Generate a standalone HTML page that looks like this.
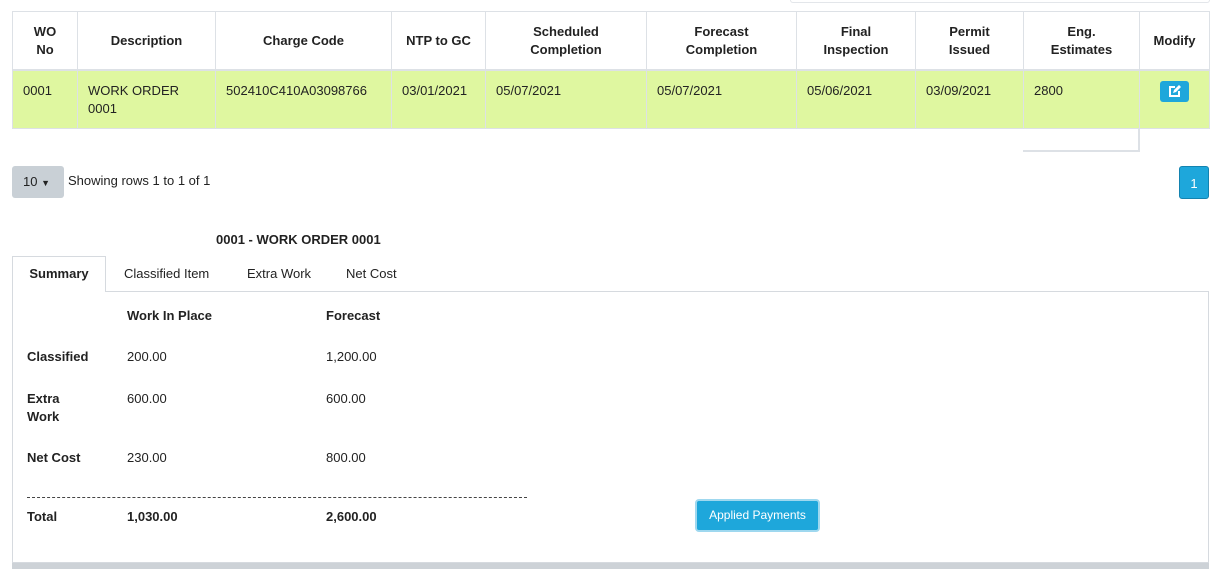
<!DOCTYPE html><html><head><style>
body{margin:0;width:1216px;height:573px;background:#fff;font-family:"Liberation Sans",sans-serif;font-size:13px;color:#222;position:relative;overflow:hidden}
.a{position:absolute}
.row{position:absolute;left:12px;display:flex;width:1198px}
.row div{box-sizing:border-box;border:1px solid #dde1e6;margin-right:-1px;line-height:18px;padding:0 10px}
.h div{height:59px;display:flex;align-items:center;justify-content:center;text-align:center;font-weight:bold}
.b{top:70px}.b div{height:59px;background:#dff7a0;padding-top:11px}
</style></head><body>
<div class="a" style="left:790px;top:-2px;width:418px;height:4px;border:1px solid #e3e6ea;border-top:none;border-radius:0 0 3px 3px"></div>
<div class="row h" style="top:11px">
<div style="width:66px">WO<br>No</div><div style="width:139px">Description</div><div style="width:177px">Charge Code</div><div style="width:95px">NTP to GC</div><div style="width:162px">Scheduled<br>Completion</div><div style="width:151px">Forecast<br>Completion</div><div style="width:120px">Final<br>Inspection</div><div style="width:109px">Permit<br>Issued</div><div style="width:117px">Eng.<br>Estimates</div><div style="width:71px">Modify</div></div>
<div class="row b">
<div style="width:66px">0001</div><div style="width:139px">WORK ORDER<br>0001</div><div style="width:177px">502410C410A03098766</div><div style="width:95px">03/01/2021</div><div style="width:162px">05/07/2021</div><div style="width:151px">05/07/2021</div><div style="width:120px">05/06/2021</div><div style="width:109px">03/09/2021</div><div style="width:117px">2800</div><div style="width:71px;text-align:center;padding-top:10px"><span style="display:inline-block;width:29px;height:21px;background:#1ea7db;border-radius:3px;vertical-align:top"><svg width="29" height="21" viewBox="0 0 29 21"><path d="M15 6H10v9h9v-5" fill="none" stroke="#fff" stroke-width="2"/><path d="M13 12l1-3 5-5 2 2-5 5z" fill="#fff"/></svg></span></div></div>
<div class="a" style="left:1023px;top:129px;width:115px;height:21px;border-right:2px solid #dde1e6;border-bottom:2px solid #dde1e6"></div>
<div class="a" style="left:12px;top:166px;width:52px;height:32px;background:#c9d0d6;border-radius:3px;line-height:32px;padding-left:11px;box-sizing:border-box">10 <span style="font-size:9px">▼</span></div>
<div class="a" style="left:68px;top:173px">Showing rows 1 to 1 of 1</div>
<div class="a" style="left:1179px;top:166px;width:30px;height:33px;background:#1ea7db;border-radius:3px;color:#fff;text-align:center;line-height:33px;border:1px solid #1383b0;box-sizing:border-box">1</div>
<div class="a" style="left:216px;top:232px;font-weight:bold">0001 - WORK ORDER 0001</div>
<div class="a" style="left:12px;top:256px;width:94px;height:36px;border:1px solid #d6dadf;border-bottom:none;background:#fff;z-index:2;box-sizing:border-box;text-align:center;line-height:34px;font-weight:bold">Summary</div>
<div class="a" style="left:124px;top:266px">Classified Item</div>
<div class="a" style="left:247px;top:266px">Extra Work</div>
<div class="a" style="left:346px;top:266px">Net Cost</div>
<div class="a" style="left:12px;top:291px;width:1197px;height:272px;border:1px solid #d6dadf;box-sizing:border-box"></div>
<div class="a" style="left:12px;top:563px;width:1197px;height:6px;background:#cdd2d7"></div>
<div class="a" style="left:127px;top:308px;font-weight:bold">Work In Place</div>
<div class="a" style="left:326px;top:308px;font-weight:bold">Forecast</div>
<div class="a" style="left:27px;top:349px;font-weight:bold">Classified</div>
<div class="a" style="left:127px;top:349px">200.00</div><div class="a" style="left:326px;top:349px">1,200.00</div>
<div class="a" style="left:27px;top:390px;font-weight:bold;line-height:18px">Extra<br>Work</div>
<div class="a" style="left:127px;top:391px">600.00</div><div class="a" style="left:326px;top:391px">600.00</div>
<div class="a" style="left:27px;top:450px;font-weight:bold">Net Cost</div>
<div class="a" style="left:127px;top:450px">230.00</div><div class="a" style="left:326px;top:450px">800.00</div>
<div class="a" style="left:27px;top:497px;width:500px;border-top:1px dashed #444"></div>
<div class="a" style="left:27px;top:509px;font-weight:bold">Total</div>
<div class="a" style="left:127px;top:509px;font-weight:bold">1,030.00</div>
<div class="a" style="left:326px;top:509px;font-weight:bold">2,600.00</div>
<div class="a" style="left:695px;top:499px;width:125px;height:33px;background:#1ea7db;border:2px solid #9fd8ef;border-radius:4px;box-sizing:border-box;color:#fff;text-align:center;line-height:29px;font-size:12px">Applied Payments</div>
</body></html>
